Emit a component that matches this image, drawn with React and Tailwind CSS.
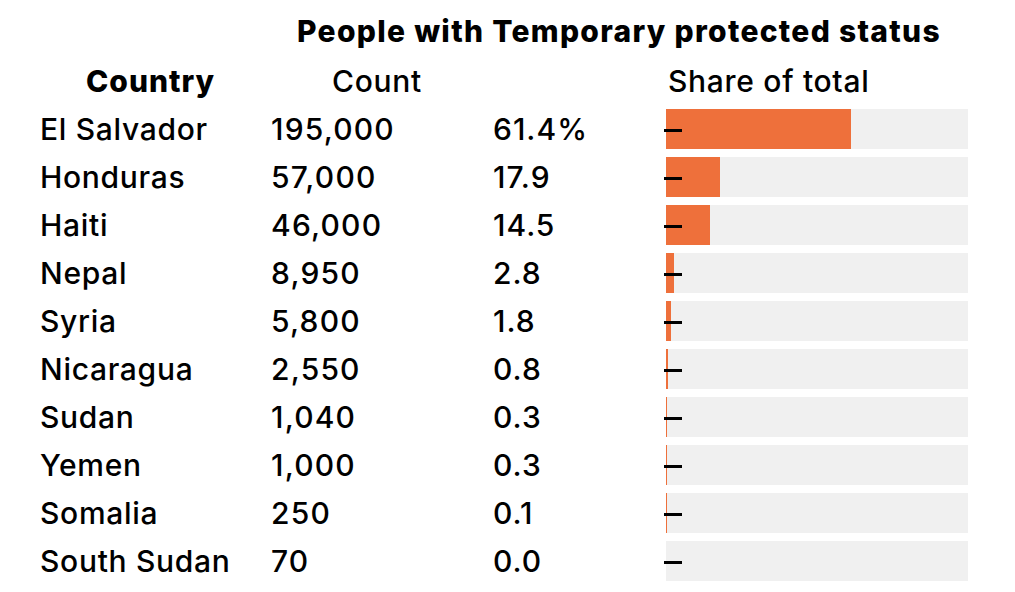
import React from "react";

const rows = [
  ["El Salvador", "195,000", "61.4%", 61.4],
  ["Honduras", "57,000", "17.9", 17.9],
  ["Haiti", "46,000", "14.5", 14.5],
  ["Nepal", "8,950", "2.8", 2.8],
  ["Syria", "5,800", "1.8", 1.8],
  ["Nicaragua", "2,550", "0.8", 0.8],
  ["Sudan", "1,040", "0.3", 0.3],
  ["Yemen", "1,000", "0.3", 0.3],
  ["Somalia", "250", "0.1", 0.1],
  ["South Sudan", "70", "0.0", 0],
];

export default function App() {
  return (
    <div
      className="w-[1015px] h-[592px] bg-white text-black overflow-hidden"
      style={{ fontFamily: "Inter, 'Noto Sans', 'Liberation Sans', sans-serif" }}
    >
      <div className="pt-[14px] pl-[297px] text-[30px] leading-[34px] font-extrabold tracking-[1.3px] whitespace-nowrap">
        People with Temporary protected status
      </div>
      <div className="mt-[13px] pl-[40px] grid grid-cols-[231px_222px_173px_302px] gap-y-[8px] text-[30px] leading-[40px] font-medium tracking-[0.7px]">
        <div className="font-extrabold pl-[46px] tracking-[1px]">Country</div>
        <div className="pl-[61px]">Count</div>
        <div></div>
        <div className="pl-[2px]">Share of total</div>
        {rows.map(([name, count, pct, v]) => (
          <React.Fragment key={name}>
            <div className="h-[40px] whitespace-nowrap">{name}</div>
            <div className="h-[40px] tracking-[1.2px]">{count}</div>
            <div className="h-[40px] tracking-[1px]">{pct}</div>
            <div className="relative h-[40px] bg-[#f0f0f0]">
              <div
                className="h-full bg-[#ee703b]"
                style={{ width: `${v}%` }}
              />
              <div className="absolute left-[-2px] top-[20px] w-[18px] h-[3px] bg-black" />
            </div>
          </React.Fragment>
        ))}
      </div>
    </div>
  );
}
